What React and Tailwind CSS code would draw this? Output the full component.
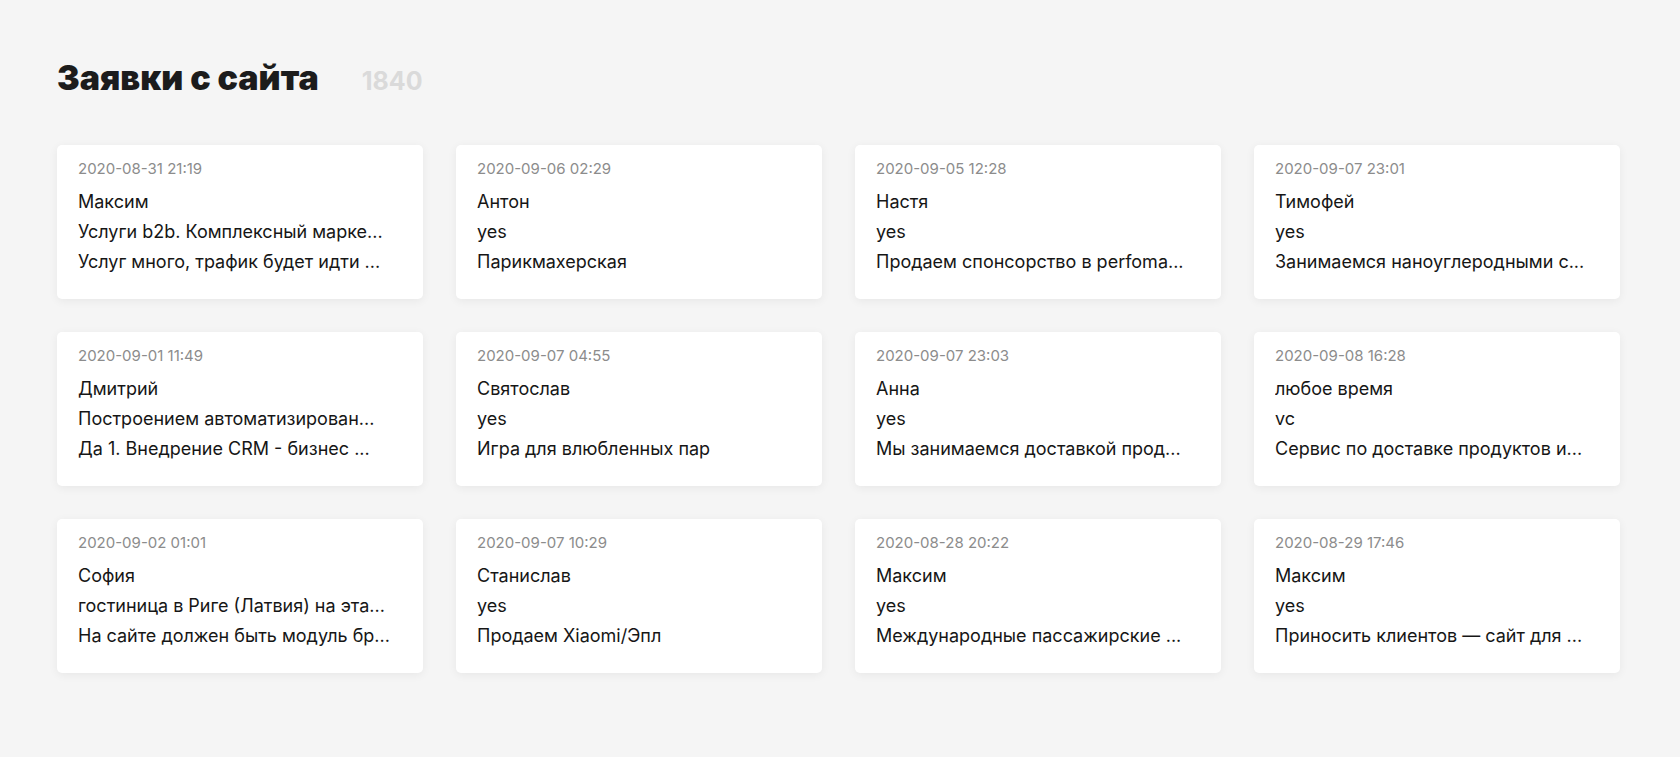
const LEADS = [
  { date: '2020-08-31 21:19', name: 'Максим', line1: 'Услуги b2b. Комплексный марке...', line2: 'Услуг много, трафик будет идти ...' },
  { date: '2020-09-06 02:29', name: 'Антон', line1: 'yes', line2: 'Парикмахерская' },
  { date: '2020-09-05 12:28', name: 'Настя', line1: 'yes', line2: 'Продаем спонсорство в perfoma...' },
  { date: '2020-09-07 23:01', name: 'Тимофей', line1: 'yes', line2: 'Занимаемся наноуглеродными с...' },
  { date: '2020-09-01 11:49', name: 'Дмитрий', line1: 'Построением автоматизирован...', line2: 'Да 1. Внедрение CRM - бизнес ...' },
  { date: '2020-09-07 04:55', name: 'Святослав', line1: 'yes', line2: 'Игра для влюбленных пар' },
  { date: '2020-09-07 23:03', name: 'Анна', line1: 'yes', line2: 'Мы занимаемся доставкой прод...' },
  { date: '2020-09-08 16:28', name: 'любое время', line1: 'vc', line2: 'Сервис по доставке продуктов и...' },
  { date: '2020-09-02 01:01', name: 'София', line1: 'гостиница в Риге (Латвия) на эта...', line2: 'На сайте должен быть модуль бр...' },
  { date: '2020-09-07 10:29', name: 'Станислав', line1: 'yes', line2: 'Продаем Xiaomi/Эпл' },
  { date: '2020-08-28 20:22', name: 'Максим', line1: 'yes', line2: 'Международные пассажирские ...' },
  { date: '2020-08-29 17:46', name: 'Максим', line1: 'yes', line2: 'Приносить клиентов — сайт для ...' },
];

const LeadCard = ({ lead }) => (
  <div className="flex flex-col rounded-[5px] bg-white px-[21px] pb-[22px] pt-[14px] shadow-[0_2px_10px_rgba(0,0,0,0.06)]">
    <div className="text-[15px] leading-[20px] text-[#8c8c8c]">{lead.date}</div>
    <div className="mt-[8px] flex flex-col text-[18px] leading-[30px] text-[#161616]">
      <div className="truncate">{lead.name}</div>
      <div className="truncate">{lead.line1}</div>
      <div className="truncate">{lead.line2}</div>
    </div>
  </div>
);

export default function App() {
  return (
    <div className="min-h-[757px] bg-[#f5f5f5] pl-[57px] pr-[60px] pt-[58px] font-['Inter',sans-serif]">
      <div className="flex items-baseline gap-[43px]">
        <h1 className="text-[34px] font-black leading-[40px] text-[#1c1c1c]">Заявки с сайта</h1>
        <span className="text-[25px] font-bold leading-[40px] text-[#dadada]">1840</span>
      </div>
      <div className="mt-[44px] grid grid-cols-4 gap-[33px]">
        {LEADS.map((lead, i) => (
          <LeadCard key={i} lead={lead} />
        ))}
      </div>
    </div>
  );
}
